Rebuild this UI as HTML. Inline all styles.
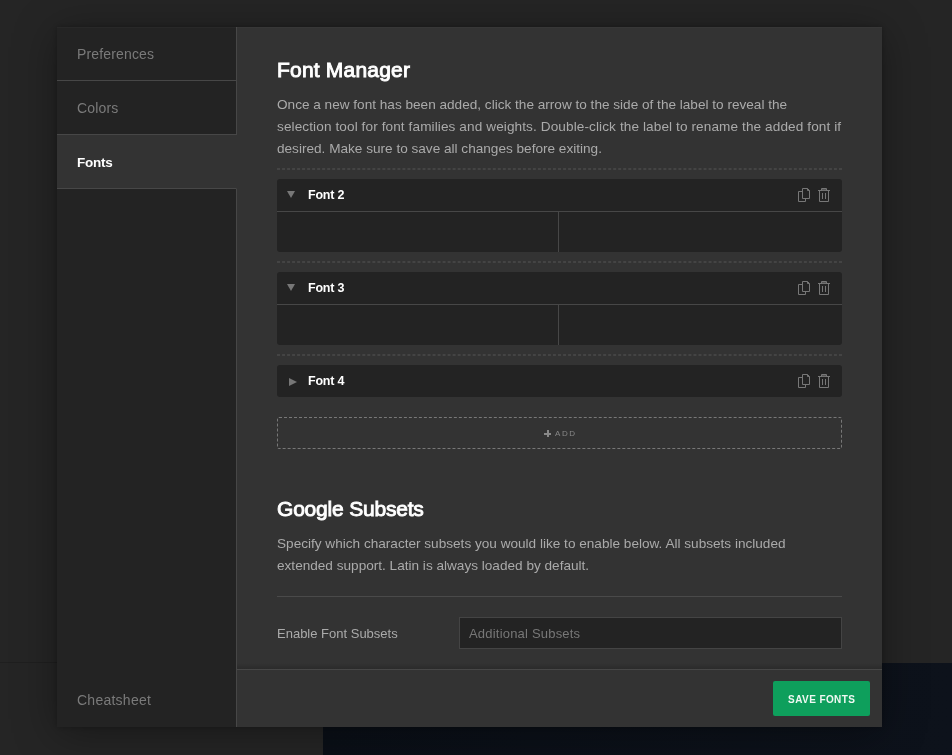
<!DOCTYPE html>
<html><head><meta charset="utf-8">
<style>
*{margin:0;padding:0;box-sizing:border-box}
html,body{-webkit-font-smoothing:antialiased;width:952px;height:755px;overflow:hidden;background:#252525;font-family:"Liberation Sans",sans-serif}
.bgl{position:absolute;left:0;top:662px;width:323px;height:1px;background:#1f1f1f}
.bgr{position:absolute;left:323px;top:663px;width:629px;height:92px;background:linear-gradient(90deg,#0a0f17,#0d121b)}
.modal{will-change:transform;position:absolute;left:57px;top:27px;width:825px;height:700px;background:#333;box-shadow:0 0 6px rgba(0,0,0,.25),0 6px 40px rgba(0,0,0,.35)}
.side{position:absolute;left:0;top:0;width:180px;height:700px;background:#232323;border-right:1px solid #474747}
.item{position:absolute;left:0;width:180px;height:54px;border-bottom:1px solid #474747;color:#7a7a7a;font-size:14px;padding-left:20px;line-height:55px;letter-spacing:.15px}
.item.active{background:#333;color:#fff;font-weight:bold;width:180px;border-right:1px solid #333;font-size:13.5px;letter-spacing:-.25px}
.cheat{position:absolute;left:20px;top:665px;color:#7a7a7a;font-size:14px;letter-spacing:.25px}
.content{position:absolute;left:180px;top:0;width:645px;height:642px}
h2{position:absolute;left:40px;color:#fff;font-size:21px;font-weight:normal;-webkit-text-stroke:.9px #fff;white-space:nowrap}
.p{position:absolute;left:40px;color:#aaa;font-size:13.6px;line-height:22px;white-space:nowrap}
.dash{position:absolute;left:40px;width:565px;height:0;border-top:1px dashed #444;border-bottom:1px dashed #444}
.row{position:absolute;left:40px;width:565px;background:#232323;border-radius:3px}
.rh{position:absolute;left:0;top:0;width:565px;height:33px;border-bottom:1px solid #474747}
.rh .t{position:absolute;left:31px;top:8px;color:#fff;font-size:12.5px;font-weight:bold;letter-spacing:-.2px;line-height:16px}
.tri{position:absolute;left:9.5px;top:12px;width:0;height:0;border-left:4px solid transparent;border-right:4px solid transparent;border-top:7.5px solid #777}
.body{position:absolute;left:0;top:33px;width:565px;height:40px}
.body .div{position:absolute;left:281px;top:0;width:1px;height:40px;background:#474747}
.footer{position:absolute;left:180px;top:642px;width:645px;height:58px;border-top:1px solid #474747}
.btn{position:absolute;left:536px;top:11px;width:97px;height:35px;background:#0e9f5c;border-radius:2px;color:#fff;font-size:10px;font-weight:bold;text-align:center;line-height:35px;letter-spacing:.4px;text-indent:.4px;color:#f0f8f3}
.ic{position:absolute;left:520px;top:8px}
.tri2{position:absolute;left:12px;top:13px;width:0;height:0;border-top:4px solid transparent;border-bottom:4px solid transparent;border-left:8px solid #777}
.add{position:absolute;left:40px;top:390px;width:565px;height:32px;border:1px dashed #777;border-radius:2px}
.plus{position:absolute;left:266px;top:12px;width:7px;height:7px;background:linear-gradient(#888,#888) center/7px 2px no-repeat,linear-gradient(#888,#888) center/2px 7px no-repeat}
.addt{position:absolute;left:277px;top:11px;color:#888;font-size:8px;letter-spacing:1.6px}
.hr{position:absolute;left:40px;top:569px;width:565px;height:1px;background:#4a4a4a}
.lbl{position:absolute;left:40px;top:599px;color:#aaa;font-size:13px}
.inp{position:absolute;left:222px;top:590px;width:383px;height:32px;background:#232323;border:1px solid #444;color:#777;font-size:13px;padding-left:9px;line-height:32px;letter-spacing:.2px}
.hl{position:absolute;left:0;top:0;width:825px;height:1px;background:rgba(255,255,255,.025)}
.footer:before{content:"";position:absolute;left:0;top:-7px;width:100%;height:6px;background:linear-gradient(rgba(0,0,0,0),rgba(0,0,0,.16))}
</style></head><body>
<div class="bgl"></div><div class="bgr"></div>
<div class="modal">
 <div class="side">
  <div class="item" style="top:0">Preferences</div>
  <div class="item" style="top:54px">Colors</div>
  <div class="item active" style="top:108px">Fonts</div>
  <div class="cheat">Cheatsheet</div>
 </div>
 <div class="content">
  <h2 style="top:31px;letter-spacing:.2px">Font Manager</h2>
  <div class="p" style="top:67px">Once a new font has been added, click the arrow to the side of the label to reveal the<br><span style="letter-spacing:.1px">selection tool for font families and weights. Double-click the label to rename the added font if</span><br>desired. Make sure to save all changes before exiting.</div>
  <div class="dash" style="top:141px"></div>
  <div class="row" style="top:152px;height:73px"><div class="rh"><div class="tri"></div><div class="t">Font 2</div><svg class="ic" width="34" height="16" viewBox="0 0 34 16"><g fill="none" stroke="#777" stroke-width="1"><path d="M5.5 4.5H1.5V14.5H8.5V12"/><path d="M5.5 1.5H10.5L12.5 3.5V11.5H5.5Z"/><path d="M10.5 1.5V3.5H12.5"/><path d="M22.5 3.5V14.5H31.5V3.5"/><path d="M21 3.5H33"/><rect x="25" y="2" width="4" height="1.2" fill="#555" stroke="none"/><path d="M24.5 3.5V1.5H29.5V3.5"/><path d="M25.5 6V12M28.5 6V12"/></g></svg></div><div class="body"><div class="div"></div></div></div>
  <div class="dash" style="top:234px"></div>
  <div class="row" style="top:245px;height:73px"><div class="rh"><div class="tri"></div><div class="t">Font 3</div><svg class="ic" width="34" height="16" viewBox="0 0 34 16"><g fill="none" stroke="#777" stroke-width="1"><path d="M5.5 4.5H1.5V14.5H8.5V12"/><path d="M5.5 1.5H10.5L12.5 3.5V11.5H5.5Z"/><path d="M10.5 1.5V3.5H12.5"/><path d="M22.5 3.5V14.5H31.5V3.5"/><path d="M21 3.5H33"/><rect x="25" y="2" width="4" height="1.2" fill="#555" stroke="none"/><path d="M24.5 3.5V1.5H29.5V3.5"/><path d="M25.5 6V12M28.5 6V12"/></g></svg></div><div class="body"><div class="div"></div></div></div>
  <div class="dash" style="top:327px"></div>
  <div class="row" style="top:338px;height:32px"><div class="rh" style="border:0"><div class="tri2"></div><div class="t">Font 4</div><svg class="ic" width="34" height="16" viewBox="0 0 34 16"><g fill="none" stroke="#777" stroke-width="1"><path d="M5.5 4.5H1.5V14.5H8.5V12"/><path d="M5.5 1.5H10.5L12.5 3.5V11.5H5.5Z"/><path d="M10.5 1.5V3.5H12.5"/><path d="M22.5 3.5V14.5H31.5V3.5"/><path d="M21 3.5H33"/><rect x="25" y="2" width="4" height="1.2" fill="#555" stroke="none"/><path d="M24.5 3.5V1.5H29.5V3.5"/><path d="M25.5 6V12M28.5 6V12"/></g></svg></div></div>
  <div class="add"><span class="plus"></span><span class="addt">ADD</span></div>
  <h2 style="top:470px;letter-spacing:-.2px">Google Subsets</h2>
  <div class="p" style="top:506px">Specify which character subsets you would like to enable below. All subsets included<br>extended support. Latin is always loaded by default.</div>
  <div class="hr"></div>
  <div class="lbl">Enable Font Subsets</div>
  <div class="inp">Additional Subsets</div>
 </div>
 <div class="footer"><div class="btn"><span style="position:relative;top:1px">SAVE FONTS</span></div></div>
 <div class="hl"></div>
</div>
</body></html>
